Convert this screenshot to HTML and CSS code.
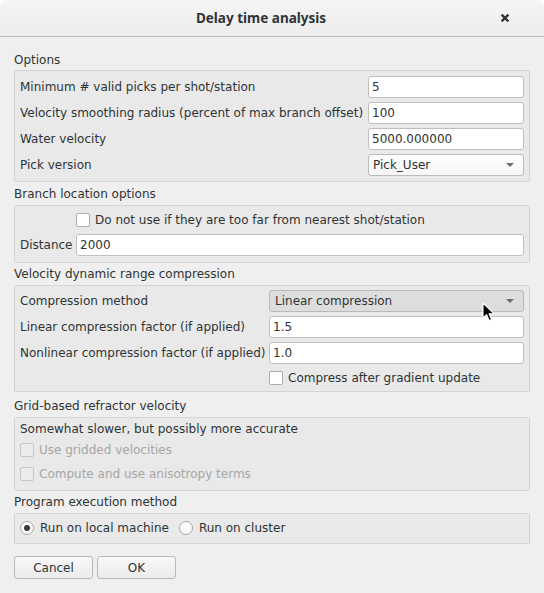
FILE: index.html
```html
<!DOCTYPE html>
<html>
<head>
<meta charset="utf-8">
<title>Delay time analysis</title>
<link rel="stylesheet" href="styles.css">
</head>
<body>
<div class="window">
  <div class="titlebar">
    <div class="title">Delay time analysis</div>
    <div class="close"><svg width="10" height="10" viewBox="0 0 10 10"><path d="M1.6 1.6 L8.4 8.4 M8.4 1.6 L1.6 8.4" stroke="#2e3436" stroke-width="2.2"/></svg></div>
  </div>
  <div class="content">
    <div class="section-label s1">Options</div>
    <div class="group form g1">
      <div class="lbl">Minimum # valid picks per shot/station</div><div class="input">5</div>
      <div class="lbl">Velocity smoothing radius (percent of max branch offset)</div><div class="input">100</div>
      <div class="lbl">Water velocity</div><div class="input">5000.000000</div>
      <div class="lbl">Pick version</div><div class="combo">Pick_User<span class="arrow"></span></div>
    </div>

    <div class="section-label s2">Branch location options</div>
    <div class="group form g2">
      <div class="cbrow col2"><span class="cb"></span><span>Do not use if they are too far from nearest shot/station</span></div>
      <div class="lbl">Distance</div><div class="input">2000</div>
    </div>

    <div class="section-label">Velocity dynamic range compression</div>
    <div class="group form g3">
      <div class="lbl">Compression method</div><div class="combo hover">Linear compression<span class="arrow"></span></div>
      <div class="lbl">Linear compression factor (if applied)</div><div class="input">1.5</div>
      <div class="lbl">Nonlinear compression factor (if applied)</div><div class="input">1.0</div>
      <div class="cbrow col2"><span class="cb"></span><span>Compress after gradient update</span></div>
    </div>

    <div class="section-label s4">Grid-based refractor velocity</div>
    <div class="group stack g4">
      <div class="note">Somewhat slower, but possibly more accurate</div>
      <div class="cbrow disabled"><span class="cb"></span><span>Use gridded velocities</span></div>
      <div class="cbrow disabled"><span class="cb"></span><span>Compute and use anisotropy terms</span></div>
    </div>

    <div class="section-label">Program execution method</div>
    <div class="group g5">
      <div class="radio"><span class="rb on"></span><span>Run on local machine</span></div>
      <div class="radio"><span class="rb"></span><span>Run on cluster</span></div>
    </div>

    <div class="buttons">
      <button class="btn">Cancel</button>
      <button class="btn">OK</button>
    </div>
  </div>
  <svg class="cursor" width="13" height="20" viewBox="0 0 13 20"><path d="M1 1 L1 16 L4.6 12.6 L7.2 18.6 L9.6 17.6 L7 11.8 L12 11.6 Z" fill="#000" stroke="#fff" stroke-width="1.1" stroke-linejoin="round"/></svg>
</div>
</body>
</html>
```
FILE: styles.css
```css
html, body {
  margin: 0;
  padding: 0;
  background: #ffffff;
}
body {
  font-family: "DejaVu Sans", "Liberation Sans", sans-serif;
  font-size: 12px;
  color: #2e3436;
}
.window {
  position: relative;
  width: 544px;
  height: 593px;
  background: #efefef;
  border-radius: 8px 8px 0 0;
  overflow: hidden;
}
.titlebar {
  height: 36px;
  display: flex;
  align-items: center;
  background: linear-gradient(#f5f5f5, #ededed);
  border-bottom: 1px solid #bdbdbd;
}
.title {
  flex: 1;
  padding-left: 34px;
  text-align: center;
  font-family: "Noto Sans", "DejaVu Sans", sans-serif;
  font-weight: bold;
  font-size: 13.5px;
  color: #2e3436;
}
.close {
  width: 34px;
  margin-right: 22px;
  display: flex;
  justify-content: center;
  align-items: center;
}
.close svg { display: block; }
.content {
  padding: 16px 14px 0 14px;
}
.section-label {
  line-height: 14px;
  margin: 4px 0 4px 0;
}
.section-label.s1 { margin: 0 0 3px 0; }
.section-label.s2 { margin: 5px 0 4px 0; }
.section-label.s4 { margin: 7px 0 4px 0; }
.group {
  background: #e9e9e9;
  border: 1px solid #d4d4d4;
  border-radius: 2px;
  padding: 4px 5px;
}
.form {
  display: grid;
  column-gap: 4px;
  row-gap: 4px;
  align-items: center;
}
.g1 { grid-template-columns: 344px 1fr; padding-top: 5px; padding-bottom: 5px; }
.g2 { grid-template-columns: 52px 1fr; padding-bottom: 6px; }
.g3 { grid-template-columns: 245px 1fr; padding-bottom: 3px; }
.lbl {
  white-space: nowrap;
  line-height: 14px;
}
.col2 { grid-column: 2; }
.input, .combo {
  position: relative;
  height: 22px;
  box-sizing: border-box;
  border: 1px solid #bfbfbf;
  border-radius: 3px;
  background: #ffffff;
  padding: 0 3px;
  line-height: 20px;
  white-space: nowrap;
}
.combo {
  padding-left: 4px;
  background: linear-gradient(#fdfdfd, #f6f6f6);
  border-color: #bcbcbc;
}
.combo.hover {
  background: #dddddd;
  border-color: #b9b9b9;
  padding-left: 5px;
}
.arrow {
  position: absolute;
  right: 9px;
  top: 8px;
  width: 0;
  height: 0;
  border-left: 4px solid transparent;
  border-right: 4px solid transparent;
  border-top: 4px solid #6e6e6e;
}
.cbrow {
  height: 20px;
  display: flex;
  align-items: center;
  gap: 5px;
  white-space: nowrap;
}
.cb {
  width: 14px;
  height: 14px;
  box-sizing: border-box;
  border: 1px solid #acacac;
  border-radius: 2px;
  background: #ffffff;
  flex: none;
}
.cbrow.disabled { color: #a6a6a6; }
.cbrow.disabled .cb {
  background: #ebebeb;
  border-color: #c6c6c6;
}
.stack {
  display: flex;
  flex-direction: column;
  gap: 4px;
  padding-bottom: 6px;
}
.note { line-height: 14px; }
.g5 {
  display: flex;
  align-items: center;
  height: 22px;
  gap: 10px;
  padding-top: 3px;
}
.radio {
  display: flex;
  align-items: center;
  gap: 6px;
  white-space: nowrap;
}
.rb {
  width: 14px;
  height: 14px;
  box-sizing: border-box;
  border: 1px solid #a9a9a9;
  border-radius: 50%;
  background: linear-gradient(#ffffff, #f4f4f4);
  display: flex;
  align-items: center;
  justify-content: center;
  flex: none;
}
.rb.on::after {
  content: "";
  width: 6px;
  height: 6px;
  border-radius: 50%;
  background: #3a3a3a;
}
.buttons {
  display: flex;
  gap: 4px;
  margin-top: 12px;
}
.btn {
  width: 79px;
  height: 23px;
  box-sizing: border-box;
  border: 1px solid #b9b9b9;
  border-radius: 3px;
  background: linear-gradient(#f8f8f8, #ebebeb);
  font-family: "DejaVu Sans", "Liberation Sans", sans-serif;
  font-size: 12px;
  color: #2e3436;
  padding: 0;
  margin: 0;
}
.cursor {
  position: absolute;
  left: 482px;
  top: 302px;
}
```
